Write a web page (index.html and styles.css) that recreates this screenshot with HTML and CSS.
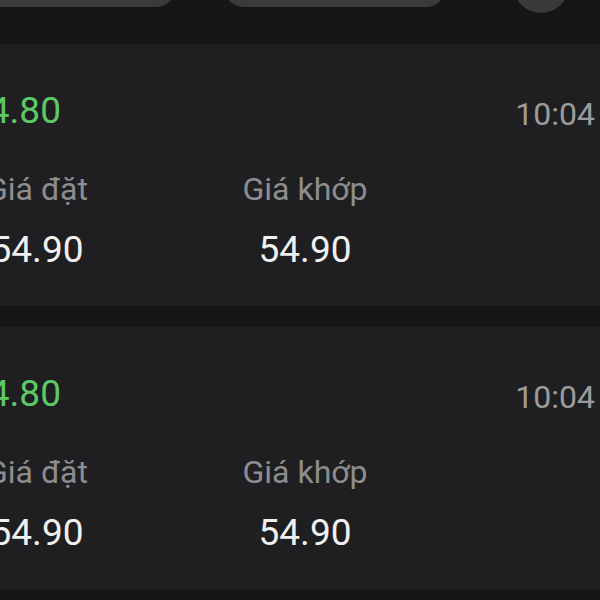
FILE: index.html
```html
<!DOCTYPE html>
<html lang="vi">
<head>
<meta charset="utf-8">
<title>Lệnh khớp</title>
<link rel="stylesheet" href="styles.css">
</head>
<body>
<div class="screen">
  <div class="topbar">
    <div class="pill pill-left"></div>
    <div class="pill pill-mid"></div>
    <div class="round"></div>
  </div>
  <div class="list">
    <div class="card">
      <div class="card-body">
        <div class="row-head">
          <span class="price">54.80</span>
          <span class="time">10:04</span>
        </div>
        <div class="grid">
          <div class="col">
            <span class="label">Giá đặt</span>
            <span class="value">54.90</span>
          </div>
          <div class="col">
            <span class="label">Giá khớp</span>
            <span class="value">54.90</span>
          </div>
        </div>
      </div>
    </div>
    <div class="card">
      <div class="card-body">
        <div class="row-head">
          <span class="price">54.80</span>
          <span class="time">10:04</span>
        </div>
        <div class="grid">
          <div class="col">
            <span class="label">Giá đặt</span>
            <span class="value">54.90</span>
          </div>
          <div class="col">
            <span class="label">Giá khớp</span>
            <span class="value">54.90</span>
          </div>
        </div>
      </div>
    </div>
  </div>
</div>
</body>
</html>
```

FILE: styles.css
```css
* { box-sizing: border-box; }
html, body {
  margin: 0;
  padding: 0;
  background: #161616;
}
body {
  font-family: Roboto, "Noto Sans", sans-serif;
}
.screen {
  width: 600px;
  height: 600px;
  overflow: hidden;
  background: #161616;
}
.topbar {
  height: 44px;
  display: flex;
  align-items: flex-start;
}
.pill {
  height: 40px;
  border-radius: 20px;
  background: #3a3a3b;
  margin-top: -33px;
  flex: none;
}
.pill-left {
  width: 216px;
  margin-left: -40px;
}
.pill-mid {
  width: 222px;
  margin-left: 48px;
}
.round {
  width: 56px;
  height: 56px;
  border-radius: 50%;
  background: #3a3a3b;
  margin-top: -43px;
  margin-left: 67px;
  flex: none;
}
.list {
  display: flex;
  flex-direction: column;
  gap: 21px;
}
.card {
  height: 262px;
  background: #1f1f21;
  overflow: hidden;
}
.card-body {
  margin-left: -32px;
  width: 627px;
  padding-top: 48px;
}
.row-head {
  display: flex;
  justify-content: space-between;
  align-items: flex-start;
}
.price {
  font-size: 37px;
  line-height: 37px;
  color: #5cc964;
}
.time {
  font-size: 32px;
  line-height: 32px;
  color: #9c9c9e;
  margin-top: 6px;
}
.grid {
  display: grid;
  grid-template-columns: 140px 394px;
  margin-top: 43px;
}
.col {
  display: flex;
  flex-direction: column;
  align-items: center;
}
.col:first-child {
  margin-left: -2px;
}
.label {
  font-size: 32px;
  line-height: 32px;
  color: #8d8d8f;
}
.value {
  margin-top: 26px;
  font-size: 37px;
  line-height: 37px;
  color: #f0f0f0;
}
```
